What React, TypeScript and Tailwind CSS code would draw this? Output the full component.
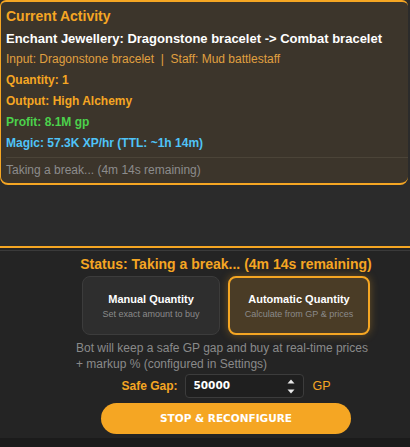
import { useState } from "react"

function Row({ className, children }: { className: string; children: React.ReactNode }) {
  return <div className={`h-[21px] leading-[21px] whitespace-nowrap ${className}`}>{children}</div>
}

function ModeCard({ title, sub, active }: { title: string; sub: string; active?: boolean }) {
  return (
    <div
      className={
        active
          ? "flex h-[59px] w-[142px] flex-col items-center justify-center rounded-[8px] border-2 border-[#f5a623] bg-[#4a3c26] shadow-[0_0_8px_rgba(245,166,35,0.35)]"
          : "flex h-[59px] w-[138px] flex-col items-center justify-center rounded-[8px] border border-[#3c3c3c] bg-[#2e2e2e]"
      }
    >
      <div className="text-[11px] font-bold leading-[14px] text-white">{title}</div>
      <div className="mt-[2px] text-[9px] leading-[12px] text-[#8a8a8a]">{sub}</div>
    </div>
  )
}

function Spinner() {
  return (
    <div className="flex flex-col items-center gap-[5px]">
      <svg width="8" height="5" viewBox="0 0 8 5">
        <path d="M4 0.5 L7.5 4.5 L0.5 4.5 Z" fill="#e8e8e8" />
      </svg>
      <svg width="8" height="5" viewBox="0 0 8 5">
        <path d="M0.5 0.5 L7.5 0.5 L4 4.5 Z" fill="#e8e8e8" />
      </svg>
    </div>
  )
}

export default function App() {
  const [gap, setGap] = useState("50000")

  return (
    <div className="flex h-[447px] w-[410px] flex-col overflow-hidden bg-[#2b2b2b] font-['Liberation_Sans',Arial,sans-serif]">
      {/* current activity card */}
      <div className="mr-[2px] rounded-b-[8px] rounded-t-[6px] border-b-2 border-l border-t-2 border-[#f5a623] bg-[#3c352b] pl-[5px] pt-[2px]">
        <div className="h-[24px] text-[14px] font-bold leading-[24px] text-[#f5a623]">Current Activity</div>
        <Row className="text-[13px] font-bold text-white">Enchant Jewellery: Dragonstone bracelet -&gt; Combat bracelet</Row>
        <Row className="text-[12px] text-[#e0a040]">Input: Dragonstone bracelet&nbsp; |&nbsp; Staff: Mud battlestaff</Row>
        <Row className="text-[12px] font-bold text-[#f5a623]">Quantity: 1</Row>
        <Row className="text-[12px] font-bold text-[#f5a623]">Output: High Alchemy</Row>
        <Row className="text-[12px] font-bold text-[#4cd14c]">Profit: 8.1M gp</Row>
        <Row className="text-[12px] font-bold text-[#4fc3f7]">Magic: 57.3K XP/hr (TTL: ~1h 14m)</Row>
        <div className="mt-[3px] border-t border-[#4b4438]" />
        <div className="h-[25px] text-[12px] leading-[25px] text-[#8c8c8c]">Taking a break... (4m 14s remaining)</div>
      </div>

      <div className="h-[61px] shrink-0" />

      {/* controls */}
      <div className="border-t-2 border-[#f5a623] bg-[#242424] pt-[2px]">
        <div className="border-t border-[#3a3a3a] pb-[4px] pl-[76px] pt-[5px]">
          <div className="flex w-[300px] flex-col items-center">
            <div className="h-[16px] whitespace-nowrap text-[14px] font-bold leading-[16px] text-[#f5a623]">
              Status: Taking a break... (4m 14s remaining)
            </div>
            <div className="mt-[4px] flex gap-[8px]">
              <ModeCard title="Manual Quantity" sub="Set exact amount to buy" />
              <ModeCard title="Automatic Quantity" sub="Calculate from GP & prices" active />
            </div>
            <p className="mt-[5px] w-[296px] self-start text-[12px] leading-[16px] text-[#8a8a8a]">
              Bot will keep a safe GP gap and buy at real-time prices + markup % (configured in Settings)
            </p>
            <div className="mt-[2px] flex h-[24px] items-center gap-[8px]">
              <span className="text-[12px] font-bold text-[#f5a623]">Safe Gap:</span>
              <div className="flex h-[24px] w-[119px] items-center rounded-[4px] border border-[#3c3c3c] bg-[#1f1f1f] pl-[7px] pr-[8px]">
                <input
                  value={gap}
                  onChange={(e) => setGap(e.target.value)}
                  className="w-full min-w-0 bg-transparent font-['DejaVu_Sans',sans-serif] text-[10.5px] font-bold text-white outline-none"
                />
                <Spinner />
              </div>
              <span className="text-[12.5px] text-[#f5a623]">GP</span>
            </div>
            <button className="mt-[5px] h-[31px] w-[250px] rounded-full bg-[#f5a623] font-['DejaVu_Sans',sans-serif] text-[10.5px] font-bold text-white">
              STOP &amp; RECONFIGURE
            </button>
          </div>
        </div>
      </div>

      <div className="flex-1 bg-[#1b1b1b]" />
    </div>
  )
}
